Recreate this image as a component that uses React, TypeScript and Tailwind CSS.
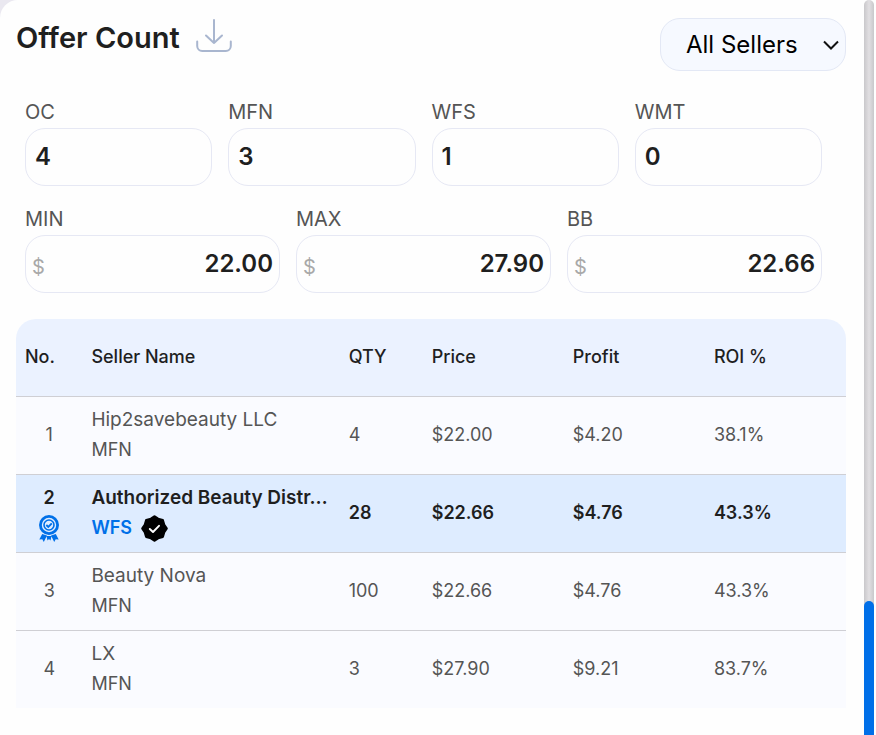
import clsx from "clsx";

const counts = [
  { id: "oc", label: "OC", value: "4" },
  { id: "mfn", label: "MFN", value: "3" },
  { id: "wfs", label: "WFS", value: "1" },
  { id: "wmt", label: "WMT", value: "0" },
];

const prices = [
  { id: "min", label: "MIN", value: "22.00" },
  { id: "max", label: "MAX", value: "27.90" },
  { id: "bb", label: "BB", value: "22.66" },
];

const offers = [
  { no: 1, seller: "Hip2savebeauty LLC", type: "MFN", qty: 4, price: "$22.00", profit: "$4.20", roi: "38.1%" },
  { no: 2, seller: "Authorized Beauty Distr…", type: "WFS", qty: 28, price: "$22.66", profit: "$4.76", roi: "43.3%", best: true },
  { no: 3, seller: "Beauty Nova", type: "MFN", qty: 100, price: "$22.66", profit: "$4.76", roi: "43.3%" },
  { no: 4, seller: "LX", type: "MFN", qty: 3, price: "$27.90", profit: "$9.21", roi: "83.7%" },
];

const DownloadIcon = () => (
  <svg viewBox="0 0 36 34" className="w-9 h-[34px]" fill="none" stroke="#a9b6cf" strokeWidth="2" strokeLinecap="round" strokeLinejoin="round">
    <path d="M18 1v23M10 16.5l8 7.5 8-7.5" />
    <path d="M1.2 22.5v4.5a5 5 0 0 0 5 5h23.600a5 5 0 0 0 5-5v-4.5" />
  </svg>
);

const AwardIcon = () => (
  <svg viewBox="0 0 20 27" className="w-5 h-[27px]" fill="none" stroke="#0070e8">
    <path d="M3.2 19L.3 24.500l3-.3 1.500 2.700 3.200-6.400zM16.800 19l2.900 5.500-3-.3-1.500 2.700-3.200-6.400zM7.500 21h5l-1 4.500-1.500-1.500-1.500 1.500z" fill="#0070e8" stroke="none" />
    <circle cx="10" cy="10" r="8.600" strokeWidth="2.800" fill="#deecff" />
    <circle cx="10" cy="10" r="5" strokeWidth="1.600" />
    <path d="M7.300 10l2 2 3.500-3.700" strokeWidth="1.900" />
  </svg>
);

const VerifiedIcon = () => (
  <svg viewBox="0 0 27 27" className="w-[27px] h-[27px] shrink-0" fill="none" strokeLinecap="round" strokeLinejoin="round">
    <path
      d="M13.5 1.500L17 3.900 21.700 5.300 23.100 10 25.500 13.500 23.100 17 21.700 21.700 17 23.100 13.500 25.500 10 23.100 5.300 21.700 3.900 17 1.500 13.500 3.900 10 5.300 5.300 10 3.900Z"
      fill="#000"
      stroke="#000"
      strokeWidth="2.600"
    />
    <path d="M8.800 14l3.200 3 6-6.200" stroke="#fff" strokeWidth="1.900" />
  </svg>
);

const Header = () => (
  <div className="flex justify-between items-start">
    <div className="flex items-center gap-4">
      <h1 className="text-[29px] leading-10 font-semibold">Offer Count</h1>
      <button type="button" aria-label="Download offers" className="pb-1 cursor-pointer">
        <DownloadIcon />
      </button>
    </div>
    <div className="grid items-center">
      <select
        aria-label="Seller filter"
        defaultValue="all"
        className="[grid-area:1/1] appearance-none h-[53px] w-[186px] pl-[25px] pr-10 rounded-[20px] border border-[#e3e8f5] bg-[#f6f9ff] text-2xl text-black"
      >
        <option value="all">All Sellers</option>
        <option value="mfn">MFN</option>
        <option value="wfs">WFS</option>
      </select>
      <svg viewBox="0 0 16 10" className="[grid-area:1/1] justify-self-end mr-[7px] w-4 h-[10px] pointer-events-none" fill="none" stroke="#111" strokeWidth="2">
        <path d="M1 1.5l7 7 7-7" />
      </svg>
    </div>
  </div>
);

const labelClass = "block text-xl leading-[30px] pb-px text-[#555]";
const fieldClass =
  "w-full h-[58px] pb-[2px] rounded-[20px] border border-[#e6e8f4] bg-[#fefefe] text-2xl font-semibold text-[#1f1f1f]";

const Fields = () => (
  <div className="mt-[26px] pl-[9px] pr-6 flex flex-col gap-[18px]">
    <div className="grid grid-cols-4 gap-4">
      {counts.map(({ id, label, value }) => (
        <div key={id}>
          <label htmlFor={id} className={labelClass}>
            {label}
          </label>
          <input id={id} readOnly value={value} className={clsx(fieldClass, "px-[9px]")} />
        </div>
      ))}
    </div>
    <div className="grid grid-cols-3 gap-4">
      {prices.map(({ id, label, value }) => (
        <div key={id}>
          <label htmlFor={id} className={labelClass}>
            {label}
          </label>
          <div className="grid items-center">
            <input id={id} readOnly value={value} className={clsx(fieldClass, "[grid-area:1/1] pl-8 pr-[6px] text-right")} />
            <span className="[grid-area:1/1] justify-self-start pl-[7px] pt-[6px] text-xl text-[#a9a9a9] pointer-events-none">$</span>
          </div>
        </div>
      ))}
    </div>
  </div>
);

const OfferTable = () => (
  <div className="mt-[26px] rounded-t-[20px] overflow-hidden">
    <table className="w-full table-fixed border-collapse text-lg text-left">
      <colgroup>
        <col className="w-[8%]" />
        <col className="w-[31%]" />
        <col className="w-[10%]" />
        <col className="w-[17%]" />
        <col className="w-[17%]" />
        <col className="w-[17%]" />
      </colgroup>
      <thead className="bg-[#ebf2ff]">
        <tr className="h-[77px] border-b border-[#cfcfd4]">
          {["No.", "Seller Name", "QTY", "Price", "Profit", "ROI %"].map((name) => (
            <th key={name} scope="col" className="px-[9px] pb-px font-medium">
              {name}
            </th>
          ))}
        </tr>
      </thead>
      <tbody>
        {offers.map((offer) => (
          <tr
            key={offer.no}
            className={clsx(
              "h-[78px] border-b border-[#cfcfd4] last:border-b-0",
              offer.best ? "bg-[#deecff] font-semibold text-[#1f1f1f]" : "bg-[#fafbff] text-[#555]"
            )}
          >
            <td className="text-center leading-[30px]">
              {offer.no}
              {offer.best && (
                <span className="flex justify-center items-center h-[30px]">
                  <AwardIcon />
                </span>
              )}
            </td>
            <td className="pl-[9px] leading-[30px]">
              <div className="truncate text-[19px] leading-[30px]">{offer.seller}</div>
              <div className="flex items-center gap-[9px]">
                <span className={clsx(offer.best && "text-[#0070e8]")}>{offer.type}</span>
                {offer.best && <VerifiedIcon />}
              </div>
            </td>
            <td className="px-[9px]">{offer.qty}</td>
            <td className="px-[9px]">{offer.price}</td>
            <td className="px-[9px]">{offer.profit}</td>
            <td className="px-[9px]">{offer.roi}</td>
          </tr>
        ))}
      </tbody>
    </table>
  </div>
);

export default function App() {
  return (
    <div className="min-h-screen flex bg-[#eae8f0] font-['Inter',sans-serif] text-[#1f1f1f]">
      <main className="flex-1 min-w-0 rounded-tl-[18px] bg-[#fefefe] pt-[18px] pl-4 pr-[18px] pb-[26px]">
        <Header />
        <Fields />
        <OfferTable />
      </main>
      <div className="flex pr-[2px] bg-[#fefefe]">
        <div className="w-[10px] flex flex-col justify-end rounded-t-full bg-linear-to-r from-[#c9c8cb] via-[#e1dfe2] to-[#c9c8cb]">
          <div className="h-[18.2%] rounded-t-full bg-[#006fe8]" />
        </div>
      </div>
    </div>
  );
}
